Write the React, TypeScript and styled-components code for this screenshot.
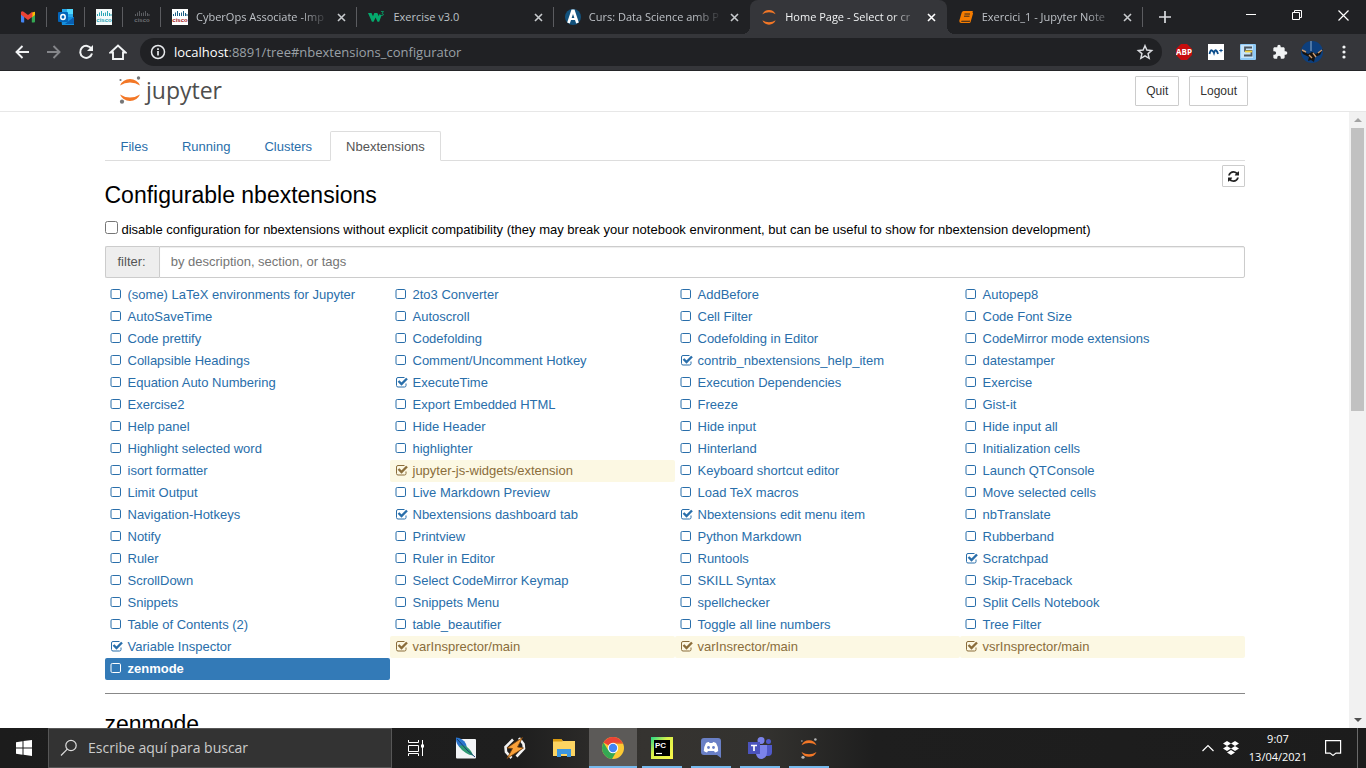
import React from "react";
import styled, { createGlobalStyle, css } from "styled-components";

const uiFont = `"Open Sans", "Noto Sans", sans-serif`;
const pageFont = `"Liberation Sans", Arial, sans-serif`;
const linkColor = "#296eaa";

const Global = createGlobalStyle`
  *, *::before, *::after { box-sizing: border-box; }
  body { margin: 0; background: #fff; overflow: hidden; }
  button { font: inherit; color: inherit; cursor: pointer; }
  svg { display: block; flex: none; }
`;

const Screen = styled.div`
  display: flex;
  flex-direction: column;
  height: 100vh;
`;

/* ---------- browser chrome ---------- */

const TabStrip = styled.div`
  display: flex;
  align-items: stretch;
  height: 34px;
  background: #202124;
  color: #bdc1c6;
  font: 11px/16px ${uiFont};
`;

const PinnedTab = styled.button<{ $first?: boolean }>`
  display: flex;
  align-items: center;
  justify-content: center;
  width: ${(p) => (p.$first ? 47 : 38)}px;
  padding: ${(p) => (p.$first ? "0 0 0 8px" : 0)};
  border: 0;
  background: linear-gradient(#5b5c60, #5b5c60) right center / 1px 20px no-repeat;
`;

const Tabs = styled.div`
  display: flex;
  flex: 0 1 982px;
  min-width: 0;
`;

const TabBox = styled.div<{ $active?: boolean; $line?: boolean }>`
  position: relative;
  display: flex;
  align-items: center;
  flex: 1 1 0;
  min-width: 0;
  gap: 8px;
  padding: 0 11px;
  ${(p) =>
    p.$line &&
    css`
      background: linear-gradient(#5b5c60, #5b5c60) right center / 1px 20px no-repeat;
    `}
  ${(p) =>
    p.$active &&
    css`
      background: #35363a;
      color: #f1f3f4;
      border-radius: 8px 8px 0 0;
      &::before,
      &::after {
        content: "";
        position: absolute;
        bottom: 0;
        width: 8px;
        height: 8px;
      }
      &::before {
        left: -8px;
        background: radial-gradient(circle at 0 0, transparent 8px, #35363a 8px);
      }
      &::after {
        right: -8px;
        background: radial-gradient(circle at 100% 0, transparent 8px, #35363a 8px);
      }
    `}
`;

const TabTitle = styled.span<{ $fade?: boolean }>`
  flex: 1;
  min-width: 0;
  overflow: hidden;
  white-space: nowrap;
  ${(p) =>
    p.$fade &&
    css`
      mask-image: linear-gradient(to right, #000 calc(100% - 28px), transparent);
    `}
`;

const PlainButton = styled.button`
  display: flex;
  align-items: center;
  justify-content: center;
  flex: none;
  padding: 0;
  border: 0;
  background: none;
`;

const NewTab = styled(PlainButton)`
  width: 44px;
`;

const WindowControls = styled.div`
  display: flex;
  margin-left: auto;
  height: 30px;
  color: #fff;
`;

const WindowButton = styled(PlainButton)`
  width: 46px;
`;

const Toolbar = styled.div`
  display: flex;
  align-items: center;
  gap: 12px;
  height: 37px;
  padding: 0 12px;
  background: #35363a;
  border-bottom: 1px solid #242528;
`;

const ToolButton = styled(PlainButton)`
  width: 20px;
  height: 24px;
  color: #f1f3f4;
`;

const Omnibox = styled.div`
  display: flex;
  align-items: center;
  flex: 1;
  min-width: 0;
  height: 28px;
  padding: 0 8px 0 10px;
  gap: 8px;
  border-radius: 14px;
  background: #202124;
  color: #9aa0a6;
  font: 13px/20px ${uiFont};
`;

const Url = styled.span`
  flex: 1;
  b {
    font-weight: 400;
    color: #fff;
  }
`;

/* ---------- notebook page ---------- */

const SiteHeader = styled.header`
  flex: none;
  border-bottom: 1px solid #e7e7e7;
  background: #fff;
`;

const HeaderInner = styled.div`
  display: flex;
  align-items: center;
  max-width: 1140px;
  height: 40px;
  margin: 0 auto;
  padding: 0 5px;
  font: 12px/18px ${pageFont};
`;

const Brand = styled.a`
  display: flex;
  align-items: center;
  gap: 4px;
  padding-bottom: 3px;
  color: #4e4e4e;
  text-decoration: none;
  font: 23px/28px ${uiFont};
`;

const HeaderActions = styled.div`
  display: flex;
  gap: 10px;
  margin-left: auto;
`;

const OutlineButton = styled.button`
  height: 30px;
  padding: 0 10px;
  border: 1px solid #ccc;
  border-radius: 1px;
  background: #fff;
  color: #333;
`;

const Viewport = styled.div`
  display: flex;
  flex: 1;
  min-height: 0;
`;

const Scroller = styled.div`
  flex: 1;
  min-width: 0;
  overflow: hidden;
  background: #fff;
`;

const Container = styled.main`
  max-width: 1140px;
  margin: 0 auto;
  padding-top: 19px;
  color: #000;
  font: 13px/18px ${pageFont};
`;

const NavTabs = styled.nav`
  display: flex;
  gap: 2px;
  border-bottom: 1px solid #ddd;
`;

const NavTab = styled.a<{ $active?: boolean }>`
  padding: 6px 15px 4px;
  margin-bottom: -1px;
  border: 1px solid transparent;
  border-radius: 2px 2px 0 0;
  color: ${linkColor};
  text-decoration: none;
  ${(p) =>
    p.$active &&
    css`
      color: #555;
      background: #fff;
      border-color: #ddd #ddd #fff;
    `}
`;

const TitleRow = styled.div`
  display: flex;
  align-items: flex-start;
  justify-content: space-between;
  padding-top: 4px;
`;

const Heading = styled.h2`
  margin: 16px 0 0;
  font-size: 23px;
  font-weight: 400;
  line-height: 28px;
`;

const RefreshButton = styled(OutlineButton)`
  height: 22px;
  padding: 0 5px;
`;

const CompatLabel = styled.label`
  display: flex;
  align-items: flex-start;
  gap: 4px;
  margin-top: 12px;
  input {
    width: 13px;
    height: 13px;
    margin: 0;
  }
`;

const FilterGroup = styled.div`
  display: flex;
  height: 32px;
  margin-top: 7px;
`;

const FilterLabel = styled.label`
  padding: 6px 13px 6px 12px;
  border: 1px solid #ccc;
  border-right: 0;
  border-radius: 2px 0 0 2px;
  background: #eee;
  color: #555;
`;

const FilterInput = styled.input`
  flex: 1;
  min-width: 0;
  padding: 0 11px;
  border: 1px solid #ccc;
  border-radius: 0 2px 2px 0;
  box-shadow: inset 0 1px 1px rgba(0, 0, 0, 0.075);
  font: 13px/18px ${pageFont};
  color: #555;
  &::placeholder {
    color: #757575;
  }
`;

const ExtensionList = styled.ul`
  display: grid;
  grid-template-columns: repeat(4, minmax(0, 1fr));
  margin: 6px 0 0;
  padding: 0;
  list-style: none;
`;

type Tone = "link" | "warning" | "selected";

const ExtensionItem = styled.li<{ $tone: Tone }>`
  height: 22px;
  padding: 0 4px;
  border-radius: 2px;
  line-height: 22px;
  color: ${(p) => ({ link: linkColor, warning: "#8a6d3b", selected: "#fff" })[p.$tone]};
  background: ${(p) => ({ link: "none", warning: "#fcf8e3", selected: "#337ab7" })[p.$tone]};
  font-weight: ${(p) => (p.$tone === "selected" ? 700 : 400)};
  label {
    display: flex;
    align-items: center;
    gap: 5px;
  }
`;

const TickBox = styled.span`
  position: relative;
  flex: none;
  width: 14px;
  height: 12px;
  input {
    position: absolute;
    inset: 0;
    width: 14px;
    height: 12px;
    margin: 0;
    opacity: 0;
  }
`;

const Rule = styled.hr`
  margin: 13px 0 16px;
  border: 0;
  border-top: 1px solid #888;
`;

const ScrollTrack = styled.div`
  display: flex;
  flex-direction: column;
  align-items: center;
  width: 17px;
  background: #f1f1f1;
`;

const ScrollArrow = styled(PlainButton)`
  width: 17px;
  height: 16px;
`;

const ScrollThumb = styled.div`
  width: 13px;
  height: 46%;
  margin-bottom: auto;
  background: #c1c1c1;
`;

/* ---------- taskbar ---------- */

const Taskbar = styled.footer`
  display: flex;
  align-items: stretch;
  flex: none;
  height: 40px;
  background: linear-gradient(to right, #1c1c1c 0, #1e1e1e 38%, #353330 47%, #33322f 56%, #1e1e1e 64%, #1c1c1c 100%);
  color: #fff;
`;

const TaskButton = styled(PlainButton)<{ $state?: "open" | "focused" }>`
  width: 48px;
  ${(p) =>
    p.$state === "open" &&
    css`
      background: linear-gradient(#76b9ed, #76b9ed) center bottom / 40px 2px no-repeat;
    `}
  ${(p) =>
    p.$state === "focused" &&
    css`
      background: linear-gradient(#76b9ed, #76b9ed) center bottom / 48px 2px no-repeat, #5c5a58;
    `}
`;

const SearchBox = styled.label`
  display: flex;
  align-items: center;
  gap: 10px;
  flex: 0 1 344px;
  padding: 0 11px;
  border: 1px solid #565656;
  background: #333;
  input {
    flex: 1;
    min-width: 0;
    padding: 0;
    border: 0;
    outline: 0;
    background: none;
    color: #fff;
    font: 14px/20px ${uiFont};
  }
  input::placeholder {
    color: #ccc;
  }
`;

const TaskList = styled.div`
  display: flex;
  gap: 1px;
  margin-left: 2px;
`;

const Tray = styled.div`
  display: flex;
  align-items: center;
  gap: 8px;
  margin-left: auto;
  font: 11px/18px ${uiFont};
`;

const Clock = styled.time`
  width: 62px;
  text-align: center;
  white-space: nowrap;
`;

const ShowDesktop = styled.button`
  align-self: stretch;
  width: 5px;
  margin-right: 4px;
  padding: 0;
  border: 0;
  border-left: 1px solid #6a6a6a;
  background: none;
`;

/* ---------- icons ---------- */

const Gmail = () => (
  <svg width="14" height="12" viewBox="0 0 14 12">
    <path d="M0 2v8.500q0 1 1 1h2.200V5z" fill="#4285f4" />
    <path d="M14 2v8.500q0 1-1 1h-2.200V5z" fill="#34a853" />
    <path d="M10.800 1.500 14 .8V4l-3.200 2.400z" fill="#fbbc04" />
    <path d="M0 1q1-1.400 2.600-.3L7 4l4.400-3.300v5L7 9 2.600 5.700 0 3.800z" fill="#ea4335" />
  </svg>
);

const Outlook = () => (
  <svg width="16" height="16" viewBox="0 0 16 16">
    <path d="M4 0h11v9H4z" fill="#28a8ea" />
    <path d="M9 0h6v5H9z" fill="#50d9ff" />
    <path d="M3 8h13v8H4z" fill="#1490df" />
    <path d="m16 8-9 7h9z" fill="#0a5fb0" />
    <rect y="3" width="10" height="10" rx="1" fill="#0364b8" />
    <ellipse cx="5" cy="8" rx="2.200" ry="2.500" fill="none" stroke="#fff" strokeWidth="1.500" />
  </svg>
);

const Cisco = ({ bg, bars, text }: { bg: string; bars: string; text: string }) => (
  <svg width="16" height="16" viewBox="0 0 16 16">
    <path d="M0 0h16v16H0z" fill={bg} />
    <path d="M1.500 5v2M3.500 3.500V7M5.500 2v5M7.500 4v3M9.500 3.500V7M11.500 2v5M13.500 4v3M15 5v2" stroke={bars} />
    <text x="8" y="13" textAnchor="middle" fontFamily="Liberation Sans, sans-serif" fontWeight="700" fontSize="6" fill={text}>
      cisco
    </text>
  </svg>
);

const W3 = () => (
  <svg width="17" height="16" viewBox="0 0 17 16">
    <path d="M0 4h3.500l1.500 3.200L6.300 4h3l1.500 3.200L11.500 5l2 1.500-2.300 6.200H9.500L7.600 8.500l-2 4.200H3.900z" fill="#04aa6d" />
    <path d="M13 2.500h2.500L14 4.500q2 .2 1.200 1.600-.8.900-2.200.2" fill="none" stroke="#04aa6d" strokeWidth=".8" />
  </svg>
);

const Academy = () => (
  <svg width="16" height="16" viewBox="0 0 16 16">
    <circle cx="8" cy="8" r="8" fill="#12517c" />
    <path d="m3.500 14 4-12h1l4 12" fill="none" stroke="#fff" strokeWidth="2.800" />
    <path d="M5 10h6" stroke="#fff" strokeWidth="2" />
  </svg>
);

const JupyterMark = ({ width, moons }: { width: number; moons?: string }) => (
  <svg width={width} height={(width * 28) / 24} viewBox="0 0 24 28">
    <path d="M2 9.500Q5 3 12 3t10 6.500Q17.500 6.500 12 6.500T2 9.500z" fill="#f37726" />
    <path d="M2 18.500Q5 25 12 25t10-6.500q-4.500 3-10 3t-10-3z" fill="#f37726" />
    {moons && (
      <g fill={moons}>
        <circle cx="20.500" cy="2" r="1.700" />
        <circle cx="2.500" cy="4" r="1.100" />
        <circle cx="4" cy="25.700" r="2.100" />
      </g>
    )}
  </svg>
);

const Book = () => (
  <svg width="16" height="16" viewBox="0 0 16 16">
    <path d="M5.500 2h8.800q.7.200.5 1L12.500 11q-.3.800-1 .8H3.800q-1 .2-.5 1h8.500l2.700-9 .6.500-2.500 8.700q-.3 1-1.200 1H3q-2-.2-1.700-2.200L3.700 3.500Q4.300 2 5.500 2z" fill="#f57c00" />
    <path d="M6.500 5h5.500M6 7.200h5.500" stroke="#202124" strokeWidth=".9" />
  </svg>
);

const Cross = ({ color = "#c8cbce" }: { color?: string }) => (
  <svg width="9" height="9" viewBox="0 0 9 9">
    <path d="m1 1 7 7M8 1 1 8" stroke={color} strokeWidth="1.600" />
  </svg>
);

const Box = ({ checked }: { checked?: boolean }) => (
  <svg width="14" height="12" viewBox="0 0 14 12" fill="none" stroke="currentColor">
    {checked ? (
      <>
        <path d="M10.500.5H4Q2.500.5 2.500 2v6.500Q2.500 10 4 10h6.500Q12 10 12 8.500V6.500" />
        <path d="m4.500 4 3 3 5.500-5.500" strokeWidth="2.400" />
      </>
    ) : (
      <rect x="2" y=".5" width="9.500" height="9" rx="1.300" />
    )}
  </svg>
);

const TASKS: { name: string; state?: "open" | "focused"; icon: React.ReactNode }[] = [
  {
    name: "Feather editor",
    icon: (
      <svg width="22" height="22" viewBox="0 0 22 22">
        <rect x="1" y="2" width="20" height="19.500" rx="1" fill="#f3f5f7" />
        <path d="M1 .5Q8 1 11 7l1.500 6Q11 14 8 13 0 8 1 .5z" fill="#2a74cc" />
        <path d="M4 9q5-2 8 1 5 4 6 8.500-4-.5-7-2.500-5-3-7-7z" fill="#2f9a72" />
        <path d="m2 2 10 11 8 7" fill="none" stroke="#143f72" />
      </svg>
    ),
  },
  {
    name: "Winamp",
    icon: (
      <svg width="22" height="22" viewBox="0 0 22 22">
        <path d="M9 2.500 1.500 10l.5 5 5.500 6M12.500 19.500l7.500-8-.5-4.500L15 1" fill="none" stroke="#f2f2f2" strokeWidth="2.600" />
        <path d="M18.500.5 3 11l5.500.5L3 21.500 19.500 11 13.500 10z" fill="#f9a13a" stroke="#7a430c" strokeWidth=".8" />
      </svg>
    ),
  },
  {
    name: "Explorador de archivos",
    icon: (
      <svg width="22" height="20" viewBox="0 0 22 20">
        <path d="M0 1h8l2 2h12v15H0z" fill="#fcd462" />
        <path d="M0 1h8.500l1 2.500H0z" fill="#d99a10" />
        <path d="M4 19v-8h14v8h-4v-3H8v3z" fill="#3c97e0" />
      </svg>
    ),
  },
  {
    name: "Google Chrome",
    state: "focused",
    icon: (
      <svg width="22" height="22" viewBox="0 0 22 22">
        <circle cx="11" cy="11" r="11" fill="#fcc934" />
        <path d="M11 11 1.500 5.500A11 11 0 0 1 20.500 5.500H11z" fill="#ea4335" />
        <path d="M1.500 5.500A11 11 0 0 0 10 22l5-8.500-4-2.500-5 2z" fill="#34a853" />
        <path d="M11 5.500h9.500a11 11 0 0 1 .5 1H11z" fill="#d93025" />
        <circle cx="11" cy="11" r="5.200" fill="#fff" />
        <circle cx="11" cy="11" r="4.200" fill="#4285f4" />
      </svg>
    ),
  },
  {
    name: "PyCharm",
    state: "open",
    icon: (
      <svg width="22" height="22" viewBox="0 0 22 22">
        <defs>
          <linearGradient id="pc" x1="0" y1="0" x2="1" y2="1">
            <stop offset="0" stopColor="#21d789" />
            <stop offset=".4" stopColor="#d8f04a" />
            <stop offset="1" stopColor="#fcf84a" />
          </linearGradient>
        </defs>
        <path d="M0 0h22v22H0z" fill="url(#pc)" />
        <path d="M3 3h16v16H3z" fill="#000" />
        <text x="4" y="11" fontFamily="Liberation Sans, sans-serif" fontWeight="700" fontSize="8" fill="#fff">
          PC
        </text>
        <path d="M5 16.500h6" stroke="#fff" strokeWidth="1.200" />
      </svg>
    ),
  },
  {
    name: "Discord",
    state: "open",
    icon: (
      <svg width="20" height="22" viewBox="0 0 20 22">
        <path d="M3 1h14q3 0 3 3v17l-4-3H3q-3 0-3-3V4q0-3 3-3z" fill="#6a80c6" />
        <path d="M5 6q2-1.200 3-1l.5 1h3l.5-1q1 0 3 1 2.500 4 2.200 8-1.600 1.400-3.200 1.400l-1-1.400H7l-1 1.400q-1.600 0-3.200-1.400Q2.700 10 5 6z" fill="#fff" />
        <circle cx="7.500" cy="10.500" r="1.400" fill="#6a80c6" />
        <circle cx="12.500" cy="10.500" r="1.400" fill="#6a80c6" />
      </svg>
    ),
  },
  {
    name: "Microsoft Teams",
    state: "open",
    icon: (
      <svg width="24" height="22" viewBox="0 0 24 22">
        <circle cx="13" cy="3.500" r="3.500" fill="#7b83eb" />
        <circle cx="20.500" cy="4.500" r="2.500" fill="#5059c9" />
        <path d="M17 8h7v7q0 4-4 4h-3z" fill="#5059c9" />
        <path d="M8 8h11v7q0 6-5.500 7Q9 22 8 17z" fill="#7b83eb" />
        <path d="M0 5h12v12H0z" fill="#4b53bc" />
        <path d="M3 8.500h6M6 8.500V14" stroke="#fff" strokeWidth="1.700" />
      </svg>
    ),
  },
  { name: "Jupyter", state: "open", icon: <JupyterMark width={18} moons="#b5b5b5" /> },
];

/* ---------- data ---------- */

const EXTENSIONS = `(some) LaTeX environments for Jupyter|2to3 Converter|AddBefore|Autopep8
AutoSaveTime|Autoscroll|Cell Filter|Code Font Size
Code prettify|Codefolding|Codefolding in Editor|CodeMirror mode extensions
Collapsible Headings|Comment/Uncomment Hotkey|contrib_nbextensions_help_item|datestamper
Equation Auto Numbering|ExecuteTime|Execution Dependencies|Exercise
Exercise2|Export Embedded HTML|Freeze|Gist-it
Help panel|Hide Header|Hide input|Hide input all
Highlight selected word|highlighter|Hinterland|Initialization cells
isort formatter|jupyter-js-widgets/extension|Keyboard shortcut editor|Launch QTConsole
Limit Output|Live Markdown Preview|Load TeX macros|Move selected cells
Navigation-Hotkeys|Nbextensions dashboard tab|Nbextensions edit menu item|nbTranslate
Notify|Printview|Python Markdown|Rubberband
Ruler|Ruler in Editor|Runtools|Scratchpad
ScrollDown|Select CodeMirror Keymap|SKILL Syntax|Skip-Traceback
Snippets|Snippets Menu|spellchecker|Split Cells Notebook
Table of Contents (2)|table_beautifier|Toggle all line numbers|Tree Filter
Variable Inspector|varInsprector/main|varInsrector/main|vsrInsprector/main
zenmode`.split(/[|\n]/);

const UNLISTED = new Set([
  "jupyter-js-widgets/extension",
  "varInsprector/main",
  "varInsrector/main",
  "vsrInsprector/main",
]);

const ENABLED = new Set([
  ...UNLISTED,
  "contrib_nbextensions_help_item",
  "ExecuteTime",
  "Nbextensions dashboard tab",
  "Nbextensions edit menu item",
  "Scratchpad",
  "Variable Inspector",
]);

const TABS = [
  { title: "CyberOps Associate -Imp", icon: <Cisco bg="#fff" bars="#1b5f86" text="#a5141a" />, line: true, fade: true },
  { title: "Exercise v3.0", icon: <W3 />, line: true },
  { title: "Curs: Data Science amb P", icon: <Academy />, fade: true },
  { title: "Home Page - Select or cr", icon: <JupyterMark width={16} />, active: true, fade: true },
  { title: "Exercici_1 - Jupyter Note", icon: <Book />, line: true, fade: true },
];

export default function App() {
  const [enabled, setEnabled] = React.useState(ENABLED);
  const [selected, setSelected] = React.useState("zenmode");

  const toggle = (name: string) => {
    const next = new Set(enabled);
    if (!next.delete(name)) next.add(name);
    setEnabled(next);
    setSelected(name);
  };

  return (
    <Screen>
      <Global />
      <TabStrip>
        <PinnedTab $first aria-label="Gmail"><Gmail /></PinnedTab>
        <PinnedTab aria-label="Outlook"><Outlook /></PinnedTab>
        <PinnedTab aria-label="Cisco Academy"><Cisco bg="#f4fafa" bars="#2aa5b5" text="#2aa5b5" /></PinnedTab>
        <PinnedTab aria-label="Cisco"><Cisco bg="none" bars="#5c5e62" text="#6c6e72" /></PinnedTab>
        <Tabs>
          {TABS.map((t) => (
            <TabBox key={t.title} $active={t.active} $line={t.line}>
              {t.icon}
              <TabTitle $fade={t.fade}>{t.title}</TabTitle>
              <PlainButton aria-label="Close tab"><Cross color={t.active ? "#fff" : undefined} /></PlainButton>
            </TabBox>
          ))}
        </Tabs>
        <NewTab aria-label="New tab">
          <svg width="12" height="12" viewBox="0 0 12 12"><path d="M6 0v12M0 6h12" stroke="#dadce0" strokeWidth="1.700" /></svg>
        </NewTab>
        <WindowControls>
          <WindowButton aria-label="Minimize">
            <svg width="10" height="10" viewBox="0 0 10 10"><path d="M0 4.500h10" stroke="#fff" /></svg>
          </WindowButton>
          <WindowButton aria-label="Restore">
            <svg width="10" height="10" viewBox="0 0 10 10" fill="none" stroke="#fff"><path d="M.5 2.500h7v7h-7zM2.500 2.500v-2h7v7h-2" /></svg>
          </WindowButton>
          <WindowButton aria-label="Close">
            <svg width="11" height="11" viewBox="0 0 11 11"><path d="m.5.5 10 10M10.500.5l-10 10" stroke="#fff" strokeWidth="1.200" /></svg>
          </WindowButton>
        </WindowControls>
      </TabStrip>

      <Toolbar>
        <ToolButton aria-label="Back">
          <svg width="14" height="14" viewBox="0 0 14 14" fill="none" stroke="#f1f3f4" strokeWidth="1.900"><path d="M14 7H1.500M7.500 1l-6 6 6 6" /></svg>
        </ToolButton>
        <ToolButton aria-label="Forward">
          <svg width="14" height="14" viewBox="0 0 14 14" fill="none" stroke="#85868a" strokeWidth="1.900"><path d="M0 7h12.500M6.500 1l6 6-6 6" /></svg>
        </ToolButton>
        <ToolButton aria-label="Reload">
          <svg width="16" height="16" viewBox="0 0 16 16"><path d="M13.500 5A6 6 0 1 0 14 9.500" fill="none" stroke="#f1f3f4" strokeWidth="2" /><path d="M15 1v6H9z" fill="#f1f3f4" /></svg>
        </ToolButton>
        <ToolButton aria-label="Home">
          <svg width="18" height="16" viewBox="0 0 18 16"><path d="m1.500 8.500 7.500-7 7.500 7H14v6.500H4V8.500z" fill="none" stroke="#f1f3f4" strokeWidth="1.900" /></svg>
        </ToolButton>
        <Omnibox>
          <svg width="16" height="16" viewBox="0 0 16 16" fill="none" stroke="#e8eaed" strokeWidth="1.500"><circle cx="8" cy="8" r="6.500" /><path d="M8 7v4.500M8 4.300v1.600" strokeWidth="1.700" /></svg>
          <Url><b>localhost</b>:8891/tree#nbextensions_configurator</Url>
          <PlainButton aria-label="Bookmark">
            <svg width="18" height="16" viewBox="0 0 24 24" fill="none" stroke="#dadce0" strokeWidth="2.200"><path d="m12 2.500 2.800 6.600 7.200.6-5.400 4.700 1.600 7-6.200-3.700-6.200 3.700 1.600-7L2 9.700l7.200-.6z" /></svg>
          </PlainButton>
        </Omnibox>
        <ToolButton aria-label="Adblock Plus">
          <svg width="16" height="16" viewBox="0 0 16 16"><path d="M5 0h6l5 5v6l-5 5H5l-5-5V5z" fill="#c70d0d" /><text x="8" y="11" textAnchor="middle" fontFamily="Open Sans, sans-serif" fontWeight="700" fontSize="8" fill="#fff">ABP</text></svg>
        </ToolButton>
        <ToolButton aria-label="Movistar">
          <svg width="16" height="16" viewBox="0 0 16 16"><path d="M0 0h16v16H0z" fill="#fff" /><path d="M1.500 10Q2.500 5.500 4 6.500T6 9q1-3.500 2.200-2.500T10 10" fill="none" stroke="#0b4d8c" strokeWidth="1.800" /><path d="M11.300 6.500h3.400M13 5v3.200" stroke="#0b4d8c" /></svg>
        </ToolButton>
        <ToolButton aria-label="Scripts">
          <svg width="16" height="16" viewBox="0 0 16 16"><rect width="16" height="16" rx="1" fill="#8fcaf5" /><path d="M1 1h12v13H1z" fill="#c6e4fa" /><path d="M12 3.500H5v3.300h6.500v4.700H4" fill="none" stroke="#4e5860" strokeWidth="1.800" /><path d="M5 7.500h7" stroke="#f3d23c" strokeWidth="1.800" /></svg>
        </ToolButton>
        <ToolButton aria-label="Extensions">
          <svg width="16" height="16" viewBox="0 0 24 24"><path d="M20.500 11H19V7c0-1.100-.9-2-2-2h-4V3.500a2.500 2.500 0 0 0-5 0V5H4c-1.100 0-2 .9-2 2v3.800h1.500a2.700 2.700 0 0 1 0 5.400H2V20c0 1.100.9 2 2 2h3.800v-1.500a2.700 2.700 0 0 1 5.400 0V22H17c1.100 0 2-.9 2-2v-4h1.500a2.500 2.500 0 0 0 0-5z" fill="#f1f3f4" /></svg>
        </ToolButton>
        <ToolButton aria-label="Profile">
          <svg width="22" height="22" viewBox="0 0 22 22"><circle cx="11" cy="11" r="11" fill="#0d3f7d" /><path d="M10 0v10" stroke="#8fb0d0" /><path d="m0 9 7 4 4-2 4 2 7-5-3 6-5 2-1 5-3-2-3 1 1-4-6-3z" fill="#16120f" /><path d="m1 9 4 2M17 12l4-3M8 14l3 3M12 12l3 4" stroke="#c89a72" strokeWidth="1.400" /></svg>
        </ToolButton>
        <ToolButton aria-label="Menu">
          <svg width="4" height="14" viewBox="0 0 4 14" fill="#f1f3f4"><circle cx="2" cy="2" r="1.600" /><circle cx="2" cy="7" r="1.600" /><circle cx="2" cy="12" r="1.600" /></svg>
        </ToolButton>
      </Toolbar>

      <SiteHeader>
        <HeaderInner>
          <Brand href="#">
            <JupyterMark width={24} moons="#767677" />
            jupyter
          </Brand>
          <HeaderActions>
            <OutlineButton>Quit</OutlineButton>
            <OutlineButton>Logout</OutlineButton>
          </HeaderActions>
        </HeaderInner>
      </SiteHeader>

      <Viewport>
        <Scroller>
          <Container>
            <NavTabs>
              <NavTab href="#files">Files</NavTab>
              <NavTab href="#running">Running</NavTab>
              <NavTab href="#clusters">Clusters</NavTab>
              <NavTab href="#nbextensions_configurator" $active>Nbextensions</NavTab>
            </NavTabs>
            <TitleRow>
              <Heading>Configurable nbextensions</Heading>
              <RefreshButton aria-label="Refresh">
                <svg width="11" height="11" viewBox="128 128 1536 1536" fill="#222">
                  <path d="M1639 1056q0 5-1 7-64 268-268 434.500t-478 166.500q-146 0-282.500-55t-243.500-157l-129 129q-19 19-45 19t-45-19-19-45v-448q0-26 19-45t45-19h448q26 0 45 19t19 45-19 45l-137 137q71 66 161 102t187 36q134 0 250-65t186-179q11-17 53-117 8-23 30-23h192q13 0 22.500 9.500t9.500 22.500zm25-800v448q0 26-19 45t-45 19h-448q-26 0-45-19t-19-45 19-45l138-138q-148-137-349-137-134 0-250 65t-186 179q-11 17-53 117-8 23-30 23h-199q-13 0-22.500-9.500t-9.500-22.500v-7q65-268 270-434.500t480-166.500q146 0 284 55.500t245 156.500l130-129q19-19 45-19t45 19 19 45z" />
                </svg>
              </RefreshButton>
            </TitleRow>
            <CompatLabel>
              <input type="checkbox" />
              disable configuration for nbextensions without explicit compatibility (they may break your notebook environment, but can be useful to show for nbextension development)
            </CompatLabel>
            <FilterGroup>
              <FilterLabel htmlFor="filter">filter:</FilterLabel>
              <FilterInput id="filter" placeholder="by description, section, or tags" />
            </FilterGroup>
            <ExtensionList>
              {EXTENSIONS.map((name) => (
                <ExtensionItem
                  key={name}
                  $tone={name === selected ? "selected" : UNLISTED.has(name) ? "warning" : "link"}
                >
                  <label>
                    <TickBox>
                      <input type="checkbox" checked={enabled.has(name)} onChange={() => toggle(name)} />
                      <Box checked={enabled.has(name)} />
                    </TickBox>
                    {name}
                  </label>
                </ExtensionItem>
              ))}
            </ExtensionList>
            <Rule />
            <Heading as="h3">{selected}</Heading>
          </Container>
        </Scroller>
        <ScrollTrack>
          <ScrollArrow aria-label="Scroll up">
            <svg width="8" height="4" viewBox="0 0 8 4"><path d="m4 0 4 4H0z" fill="#a3a3a3" /></svg>
          </ScrollArrow>
          <ScrollThumb />
          <ScrollArrow aria-label="Scroll down">
            <svg width="8" height="4" viewBox="0 0 8 4"><path d="M0 0h8L4 4z" fill="#505050" /></svg>
          </ScrollArrow>
        </ScrollTrack>
      </Viewport>

      <Taskbar>
        <TaskButton aria-label="Inicio">
          <svg width="16" height="16" viewBox="0 0 16 16" fill="#fff"><path d="m0 2.200 6.500-.9v6.200H0zM7.500 1.100 16 0v7.500H7.500zM0 8.500h6.500v6.200L0 13.800zM7.500 8.500H16V16l-8.500-1.200z" /></svg>
        </TaskButton>
        <SearchBox>
          <svg width="18" height="18" viewBox="0 0 18 18" fill="none" stroke="#ddd" strokeWidth="1.200"><circle cx="11" cy="6.500" r="5.200" /><path d="M7.300 10.200 1 16.500" /></svg>
          <input type="text" aria-label="Buscar" placeholder="Escribe aquí para buscar" />
        </SearchBox>
        <TaskButton aria-label="Vista de tareas">
          <svg width="17" height="16" viewBox="0 0 17 16" fill="none" stroke="#fff"><path d="M.5 0v2.500h10V0M.5 5.500h10v6H.5zM.5 16v-2.500h10V16M14.500 0v16" /><path d="M13 4.500h3v3h-3z" fill="#fff" stroke="none" /></svg>
        </TaskButton>
        <TaskList>
          {TASKS.map((t) => (
            <TaskButton key={t.name} aria-label={t.name} $state={t.state}>{t.icon}</TaskButton>
          ))}
        </TaskList>
        <Tray>
          <PlainButton aria-label="Iconos ocultos">
            <svg width="14" height="8" viewBox="0 0 14 8" fill="none" stroke="#fff" strokeWidth="1.200"><path d="m1.500 7 5.500-5.500L12.500 7" /></svg>
          </PlainButton>
          <PlainButton aria-label="Dropbox">
            <svg width="16" height="14" viewBox="0 0 16 14" fill="#fff"><path d="m4 0 4 2.500L4 5 0 2.500zM12 0l4 2.500L12 5 8 2.500zM4 5l4 2.500L4 10 0 7.500zM12 5l4 2.500-4 2.500-4-2.500zM8 9l4 2.500L8 14l-4-2.500z" /></svg>
          </PlainButton>
          <Clock>9:07<br />13/04/2021</Clock>
          <PlainButton aria-label="Notificaciones">
            <svg width="32" height="16" viewBox="1 0 32 16" fill="none" stroke="#fff" strokeWidth="1.200"><path d="M9.600.6h15v12.500H20l-3 2.300-3-2.300H9.600z" /></svg>
          </PlainButton>
          <ShowDesktop aria-label="Mostrar escritorio" />
        </Tray>
      </Taskbar>
    </Screen>
  );
}
